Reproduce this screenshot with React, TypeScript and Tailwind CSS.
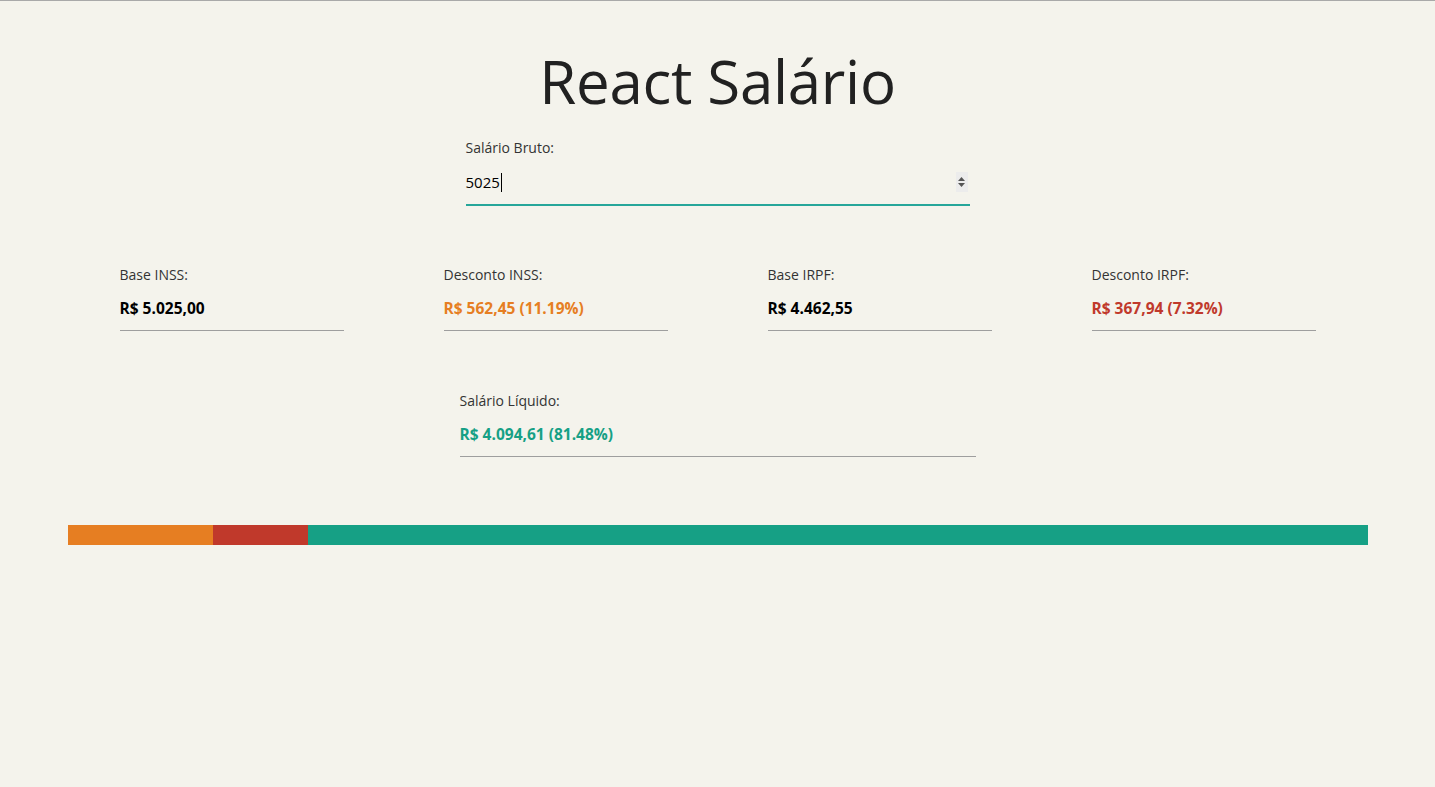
import React from 'react';

const font = { fontFamily: '"Open Sans", "Noto Sans", sans-serif' };

type Item = { label: string; value: string; color: string };

const items: Item[] = [
  { label: 'Base INSS:', value: 'R$ 5.025,00', color: 'text-black' },
  { label: 'Desconto INSS:', value: 'R$ 562,45 (11.19%)', color: 'text-[#e67e22]' },
  { label: 'Base IRPF:', value: 'R$ 4.462,55', color: 'text-black' },
  { label: 'Desconto IRPF:', value: 'R$ 367,94 (7.32%)', color: 'text-[#c0392b]' },
];

function ReadOnlyField({ label, value, color, width }: Item & { width: string }) {
  return (
    <div className={`${width} flex flex-col`}>
      <span className="text-[14px] leading-5 text-[#333]">{label}</span>
      <span className={`mt-[13px] text-[15.5px] leading-5 font-bold ${color}`}>{value}</span>
      <div className="mt-[12px] h-px bg-[#9e9e9e]" />
    </div>
  );
}

export default function App() {
  return (
    <div className="min-h-screen bg-[#f4f3ec] border-t border-[#a9a9a9]" style={font}>
      <div className="w-[1300px] mx-auto flex flex-col items-center">
        <h1 className="mt-[44px] text-[60px] leading-[72px] font-normal text-[#212121] tracking-[-0.3px]">
          React Salário
        </h1>

        {/* salário bruto */}
        <div className="mt-[21px] w-[504px] flex flex-col">
          <label className="text-[14px] leading-5 text-[#333]">Salário Bruto:</label>
          <div className="mt-[10px] h-[28px] flex items-center justify-between border-b-2 border-[#26a69a] pb-[8px] box-content">
            <div className="flex items-center text-[15px] text-black">
              5025
              <span className="inline-block w-px h-[19px] bg-black ml-px" />
            </div>
            <div className="mr-[2px] w-[12px] h-[20px] bg-[#ececec] flex flex-col items-center justify-center gap-[2px]">
              <svg width="7" height="4" viewBox="0 0 7 4"><path d="M0 4 L3.5 0 L7 4 Z" fill="#555" /></svg>
              <svg width="7" height="4" viewBox="0 0 7 4"><path d="M0 0 L3.5 4 L7 0 Z" fill="#555" /></svg>
            </div>
          </div>
        </div>

        {/* bases e descontos */}
        <div className="mt-[59px] w-full flex gap-[100px] px-[52px]">
          {items.map((it) => (
            <ReadOnlyField key={it.label} {...it} width="w-[224px]" />
          ))}
        </div>

        {/* salário líquido */}
        <div className="mt-[60px]">
          <ReadOnlyField
            label="Salário Líquido:"
            value="R$ 4.094,61 (81.48%)"
            color="text-[#16a085]"
            width="w-[516px]"
          />
        </div>

        {/* barra */}
        <div className="mt-[68px] w-full h-[20px] flex">
          <div className="h-full bg-[#e67e22]" style={{ width: '11.19%' }} />
          <div className="h-full bg-[#c0392b]" style={{ width: '7.32%' }} />
          <div className="h-full flex-1 bg-[#16a085]" />
        </div>
      </div>
    </div>
  );
}
